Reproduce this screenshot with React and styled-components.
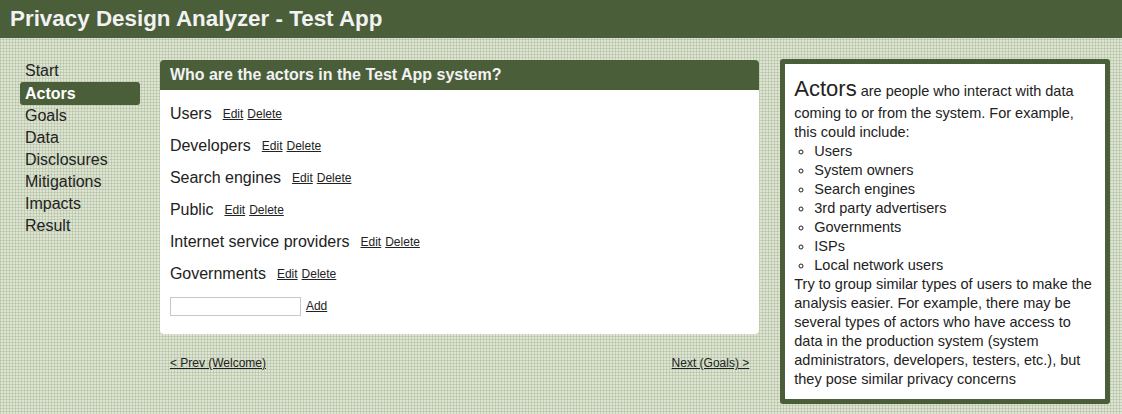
import React from "react";
import styled, { createGlobalStyle } from "styled-components";

const GREEN = "#4b5e3a";

const Global = createGlobalStyle`
  html, body { margin: 0; padding: 0; }
  body {
    font-family: "Liberation Sans", Arial, sans-serif;
    color: #222;
    background-color: #dde4d3;
    background-image:
      linear-gradient(90deg, rgba(160,178,140,0.4) 1px, transparent 1px),
      linear-gradient(rgba(160,178,140,0.4) 1px, transparent 1px);
    background-size: 3px 3px;
    min-height: 414px;
  }
`;

const Header = styled.header`
  height: 38px;
  background: ${GREEN};
  display: flex;
  align-items: center;
  padding-left: 10px;
`;

const Title = styled.h1`
  margin: 0;
  color: #f2f2f2;
  font-size: 22.4px;
  font-weight: bold;
`;

const Layout = styled.div`
  display: flex;
  align-items: flex-start;
  padding: 22px 12px 0 20px;
`;

const Nav = styled.nav`
  width: 120px;
  display: flex;
  flex-direction: column;
`;

const NavItem = styled.a`
  display: block;
  height: ${(p) => (p.$active ? 23 : 22)}px;
  line-height: ${(p) => (p.$active ? 23 : 22)}px;
  padding-left: 5px;
  font-size: 16px;
  color: ${(p) => (p.$active ? "#fff" : "#222")};
  font-weight: ${(p) => (p.$active ? "bold" : "normal")};
  background: ${(p) => (p.$active ? GREEN : "transparent")};
  border-radius: 3px;
  text-decoration: none;
`;

const Main = styled.div`
  width: 600px;
  margin-left: 20px;
`;

const Panel = styled.section`
  background: #fff;
  border-radius: 4px;
  overflow: hidden;
`;

const PanelHead = styled.h2`
  margin: 0;
  height: 30px;
  line-height: 30px;
  background: ${GREEN};
  color: #f2f2f2;
  font-size: 16px;
  font-weight: bold;
  padding-left: 10px;
`;

const PanelBody = styled.div`
  padding: 8px 10px 12px;
`;

const Row = styled.div`
  height: 32px;
  display: flex;
  align-items: center;
  gap: 4px;
`;

const Name = styled.span`
  font-size: 16px;
  color: #222;
  margin-right: 7px;
`;

const SmallLink = styled.a`
  font-size: 12px;
  color: #222;
  text-decoration: underline;
  cursor: pointer;
`;

const Input = styled.input`
  width: 127px;
  height: 15px;
  border: 1px solid #c8c8c8;
  padding: 1px;
  margin: 0 1px 0 0;
  font-family: inherit;
`;

const Pager = styled.div`
  display: flex;
  justify-content: space-between;
  padding: 22px 10px 0;
`;

const Aside = styled.aside`
  width: 330px;
  box-sizing: border-box;
  margin-left: 21px;
  margin-top: -1px;
  border: 5px solid ${GREEN};
  border-radius: 3px;
  background: #fff;
  padding: 12px 12px 10px 9px;
  font-size: 14.5px;
  line-height: 19px;
  color: #222;
`;

const Lead = styled.div`
  line-height: 26px;
`;

const Big = styled.span`
  font-size: 22px;
`;

const List = styled.ul`
  margin: 0;
  padding-left: 20px;
  list-style: circle;
`;

const actors = [
  "Users",
  "Developers",
  "Search engines",
  "Public",
  "Internet service providers",
  "Governments",
];

const navItems = [
  "Start",
  "Actors",
  "Goals",
  "Data",
  "Disclosures",
  "Mitigations",
  "Impacts",
  "Result",
];

const examples = [
  "Users",
  "System owners",
  "Search engines",
  "3rd party advertisers",
  "Governments",
  "ISPs",
  "Local network users",
];

export default function App() {
  return (
    <>
      <Global />
      <Header>
        <Title>Privacy Design Analyzer - Test App</Title>
      </Header>
      <Layout>
        <Nav>
          {navItems.map((n) => (
            <NavItem key={n} $active={n === "Actors"}>
              {n}
            </NavItem>
          ))}
        </Nav>
        <Main>
          <Panel>
            <PanelHead>Who are the actors in the Test App system?</PanelHead>
            <PanelBody>
              {actors.map((a) => (
                <Row key={a}>
                  <Name>{a}</Name>
                  <SmallLink>Edit</SmallLink>
                  <SmallLink>Delete</SmallLink>
                </Row>
              ))}
              <Row>
                <Input type="text" />
                <SmallLink>Add</SmallLink>
              </Row>
            </PanelBody>
          </Panel>
          <Pager>
            <SmallLink>&lt; Prev (Welcome)</SmallLink>
            <SmallLink>Next (Goals) &gt;</SmallLink>
          </Pager>
        </Main>
        <Aside>
          <Lead>
            <Big>Actors</Big> are people who interact with data
          </Lead>
          coming to or from the system. For example, this could include:
          <List>
            {examples.map((e) => (
              <li key={e}>{e}</li>
            ))}
          </List>
          Try to group similar types of users to make the analysis easier. For
          example, there may be several types of actors who have access to data
          in the production system (system administrators, developers, testers,
          etc.), but they pose similar privacy concerns
        </Aside>
      </Layout>
    </>
  );
}
